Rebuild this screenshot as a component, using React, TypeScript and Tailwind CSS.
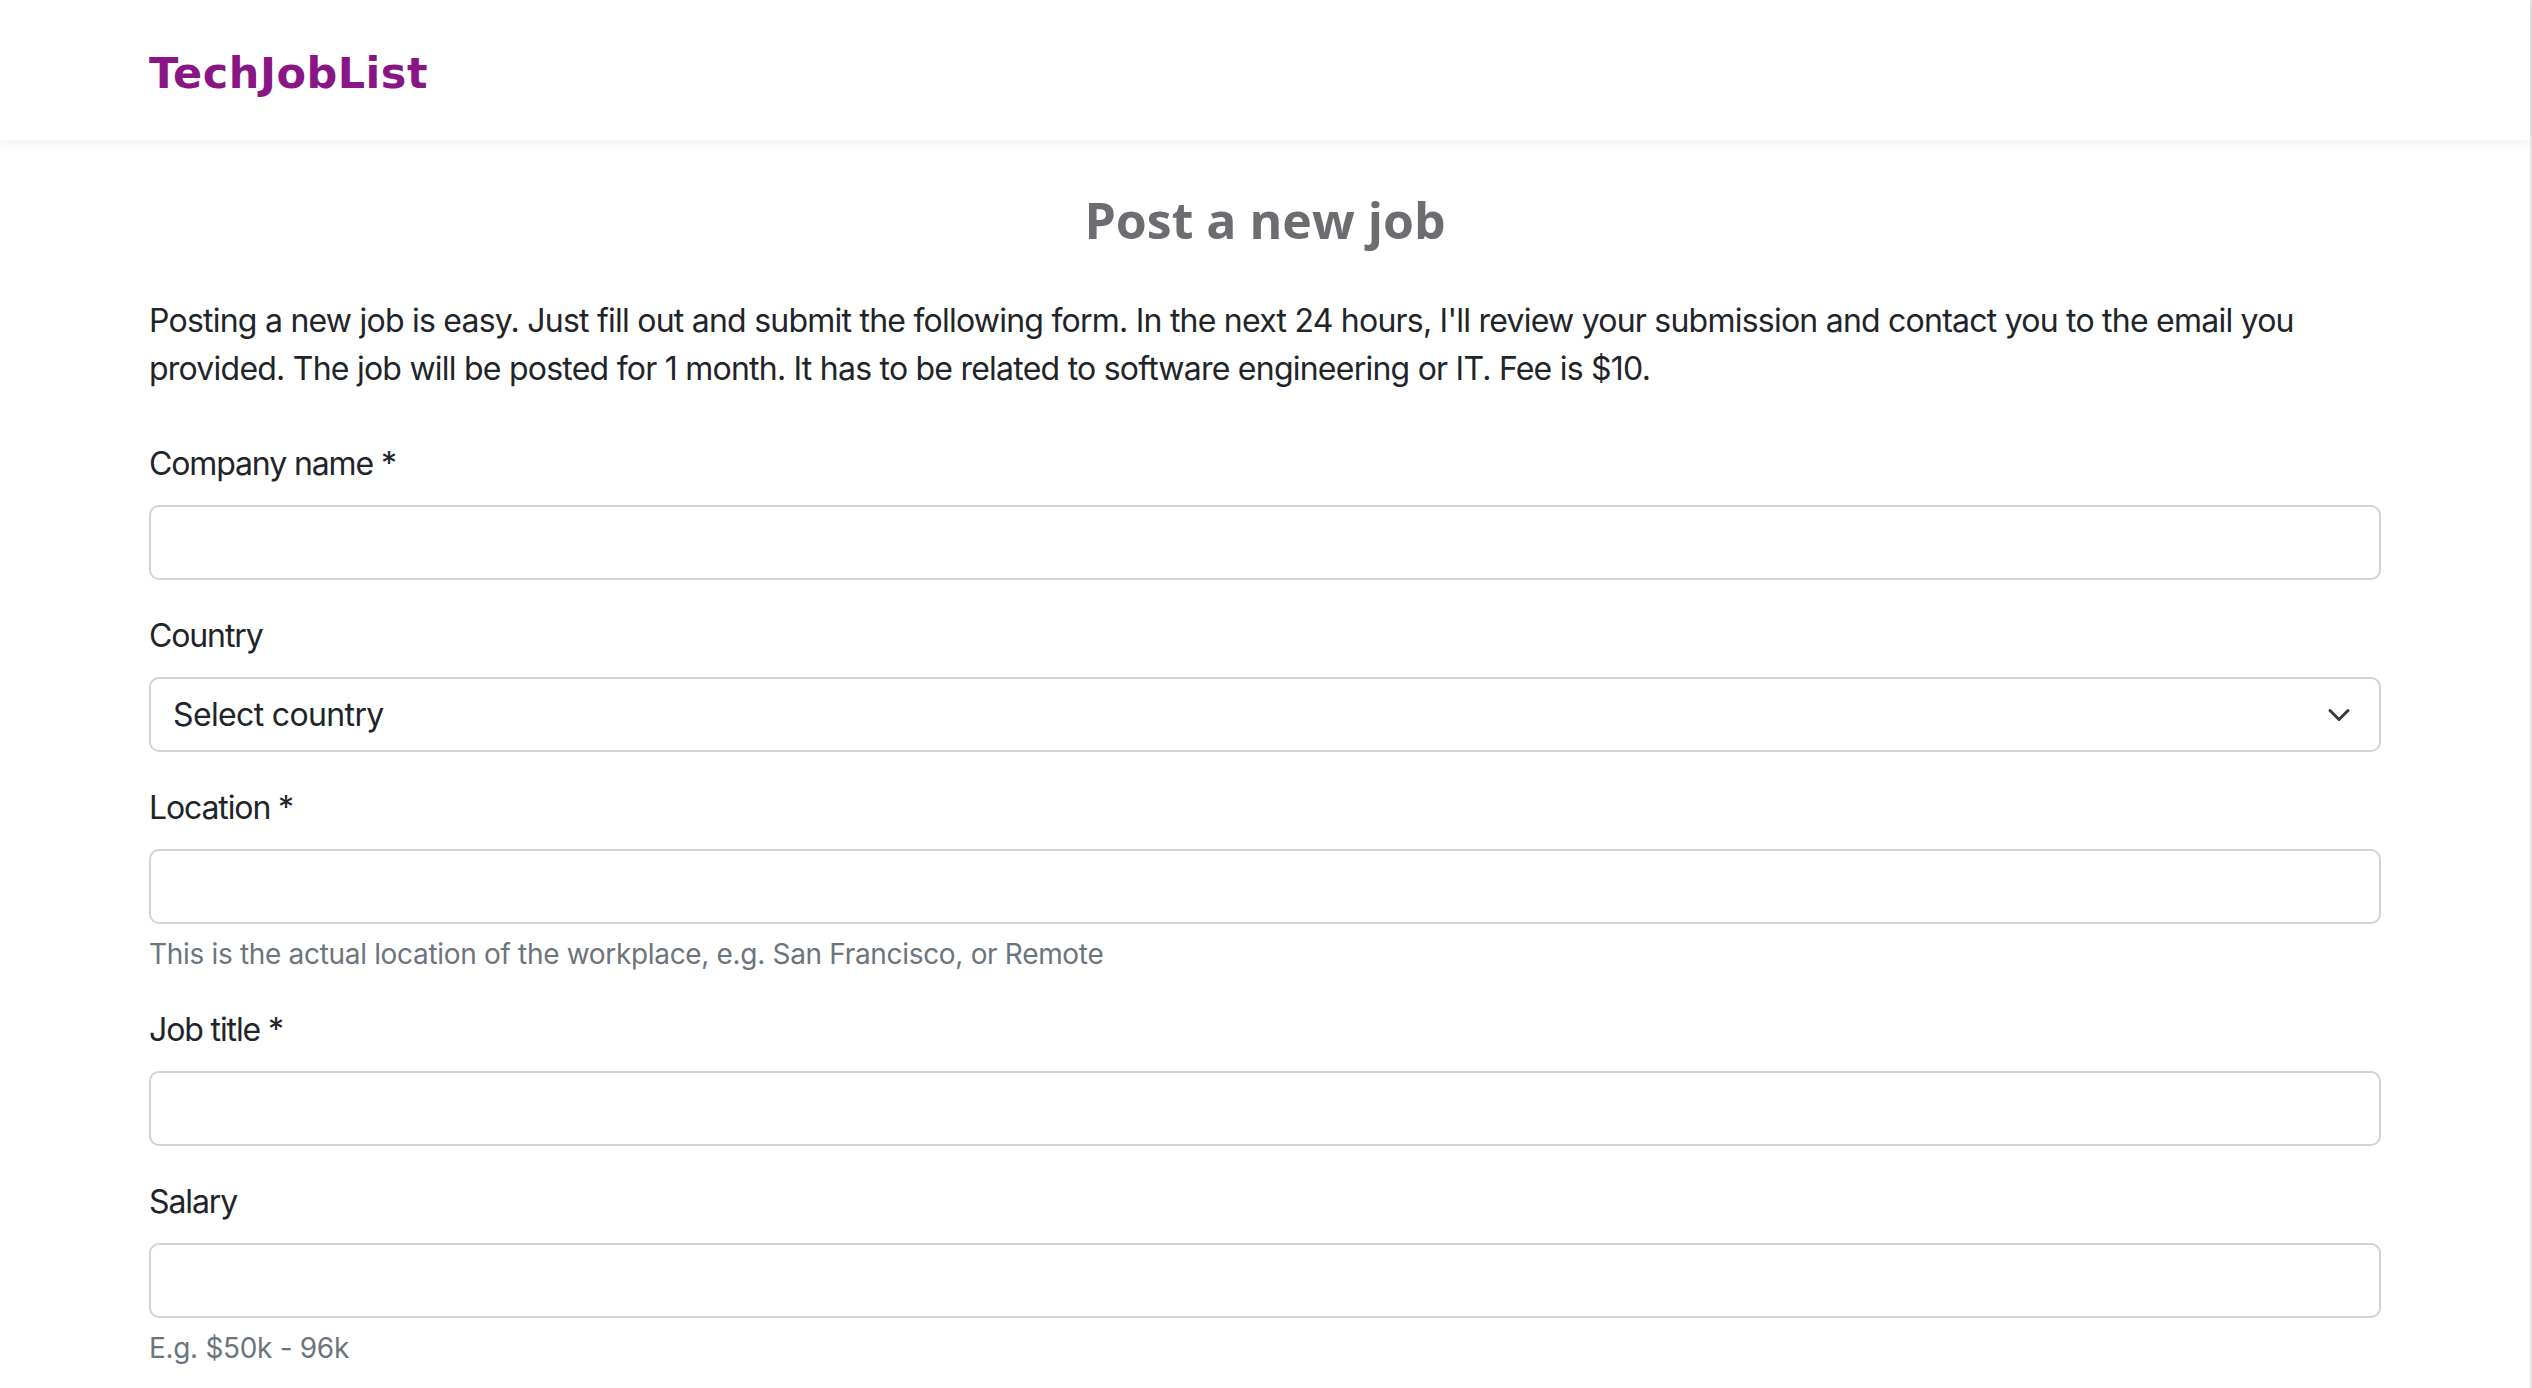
const fields = [
  { label: "Company name *", kind: "input", help: "" },
  { label: "Country", kind: "select", help: "" },
  {
    label: "Location *",
    kind: "input",
    help: "This is the actual location of the workplace, e.g. San Francisco, or Remote",
  },
  { label: "Job title *", kind: "input", help: "" },
  { label: "Salary", kind: "input", help: "E.g. $50k - 96k" },
];

function Chevron() {
  return (
    <svg
      className="pointer-events-none absolute right-[30px] top-1/2 h-6 w-6 -translate-y-1/2"
      viewBox="0 0 24 24"
      fill="none"
      stroke="#343a40"
      strokeWidth="3"
      strokeLinecap="round"
      strokeLinejoin="round"
    >
      <polyline points="3,7.5 12,16.5 21,7.5" />
    </svg>
  );
}

export default function App() {
  return (
    <div className="min-h-screen border-r-2 border-[#e6e6e6] bg-white font-['Inter',sans-serif] tracking-[-0.02em] text-[#212529]">
      <header className="relative z-10 h-[140px] bg-white shadow-[0_3px_12px_rgba(0,0,0,0.07)]">
        <div className="mx-auto flex h-full max-w-[2280px] items-center px-6 pt-[6px]">
          <span className="font-['DejaVu_Sans',sans-serif] text-[43px] font-bold leading-none tracking-[0.5px] text-[#8a1585]">
            TechJobList
          </span>
        </div>
      </header>

      <main className="mx-auto max-w-[2280px] px-6 pb-16">
        <h1 className="mt-[47px] text-center font-['Open_Sans',sans-serif] text-[50px] font-bold leading-[67px] tracking-normal text-[#6c6d71]">
          Post a new job
        </h1>

        <p className="mt-[43px] text-[32px] leading-[48px] tracking-[-0.024em]">
          Posting a new job is easy. Just fill out and submit the following form. In the next 24
          hours, I'll review your submission and contact you to the email you provided. The job
          will be posted for 1 month. It has to be related to software engineering or IT. Fee is
          $10.
        </p>

        <form className="mt-[47px] flex flex-col gap-8">
          {fields.map((field) => (
            <div key={field.label} className="flex flex-col">
              <label className="mb-[17px] text-[32px] leading-[48px] tracking-[-0.035em]">
                {field.label}
              </label>
              {field.kind === "select" ? (
                <div className="relative">
                  <select className="h-[75px] w-full appearance-none rounded-[10px] border-2 border-[#ced4da] bg-white pl-[22px] text-[32px] tracking-[-0.02em] text-[#212529] outline-none">
                    <option>Select country</option>
                  </select>
                  <Chevron />
                </div>
              ) : (
                <input
                  type="text"
                  className="h-[75px] w-full rounded-[10px] border-2 border-[#ced4da] bg-white px-[22px] text-[32px] outline-none"
                />
              )}
              {field.help && (
                <p className="mt-[10px] text-[28px] leading-[40px] text-[#6c757d]">{field.help}</p>
              )}
            </div>
          ))}
        </form>
      </main>
    </div>
  );
}
